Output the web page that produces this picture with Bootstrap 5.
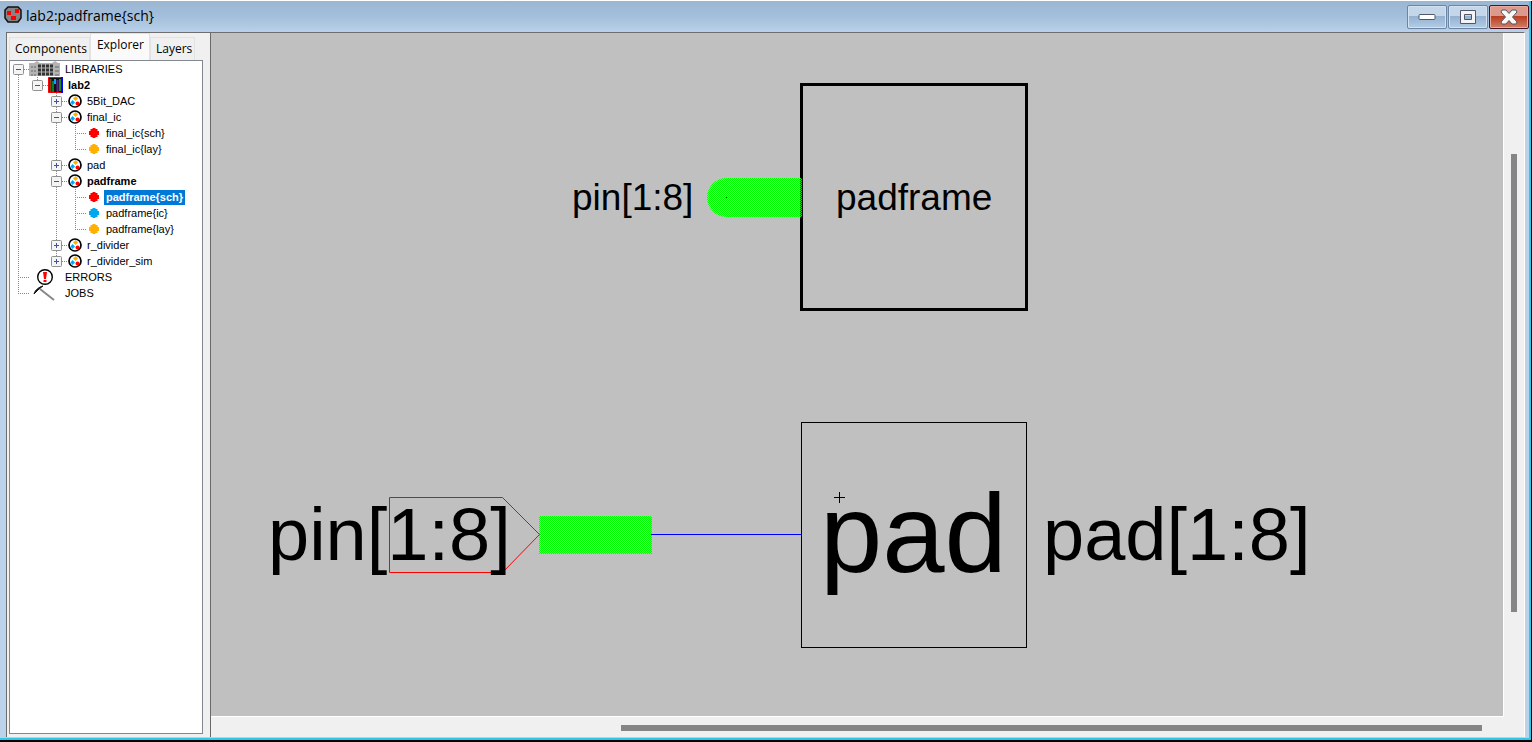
<!DOCTYPE html>
<html lang="en">
<head>
<meta charset="utf-8">
<meta name="viewport" content="width=device-width, initial-scale=1">
<title>lab2:padframe{sch}</title>
<link href="https://cdn.jsdelivr.net/npm/bootstrap@5.3.0/dist/css/bootstrap.min.css" rel="stylesheet">
<style>
body{background:#bcd2ea;font-family:"Open Sans","Noto Sans",sans-serif;color:#000;overflow:hidden}
.win{border-top:1px solid #fff;border-bottom:2px solid #000;box-shadow:inset -1px 0 #000,inset -3px 0 #2cc8e8,inset 0 -2px #2cc8e8;padding:0 7px 3px 6px}
.titlebar{height:31px;flex:none;margin:0 -4px 0 -6px;padding-left:4px;background:linear-gradient(#9ab6d2,#a4bfdb 50%,#b9d1ea)}
.title-text{font-size:14px;line-height:20px;margin:1px 0 0 4px}
.wbtns{gap:1px}
.wbtn{width:40px;height:24px;padding:0;border:1px solid #6d85a4;border-radius:2px;background:linear-gradient(#c3d6ea 0 45%,#93b0cf 45%,#b3cde6);box-shadow:inset 0 0 0 1px #d3e2f1;display:flex;align-items:center;justify-content:center}
.wbtn.close-w{border-color:#4a1222;background:linear-gradient(#dc9a8c 0 45%,#b83a1e 45%,#d08066);box-shadow:inset 0 0 0 1px #e6aca0}
.inner{border-top:1px solid #6e6e6e;border-left:1px solid #6e6e6e;border-right:1px solid #fff;background:#f0f0f0}
.side{width:203px;padding:0 7px 3px 2px}
.tabs{height:27px}
.tabs button{border:1px solid #e2e2e2;border-bottom:0;background:#f0f0f0;padding:0 2px 0 5px;font-size:12px;line-height:20px;height:23px;white-space:nowrap;color:#000}
.tabs .on{height:27px;background:#fafafa;padding:0 5px 4px 6px}
.tree{border:1px solid #828790;background:#fff}
.tree ul{list-style:none;margin:0;padding:0}
.trow{height:16px;font:11px/16px "Liberation Sans",Arial,sans-serif;display:flex;align-items:center;white-space:nowrap}
.trow svg{flex:none;display:block}
.trow span{padding:0 2px;line-height:15px;margin-left:2px}
.sel{background:#0078d7;color:#fff}
.canvas-col{border-left:1px solid #696969;min-width:0}
.sheet{background:#c0c0c0;min-width:0;overflow:hidden;border-right:1px solid #fff;border-bottom:1px solid #fff}
.sheet svg{display:block}
.sheet text{font-family:"Liberation Sans",Arial,sans-serif}
.vbar{width:20px;padding:121px 6px 0 7px}
.hbar{height:20px;padding:8px 42px 0 410px}
.thumb-v{width:6px;height:458px;background:#858585}
.thumb-h{height:6px;background:#858585}
</style>
</head>
<body>
<svg width="0" height="0" class="position-absolute" aria-hidden="true">
<defs>
<g id="minus"><rect x=".5" y=".5" width="10" height="10" rx="1" fill="#f4f4f4" stroke="#919191"/><path d="M3 5.500h5" stroke="#3a559f"/></g>
<g id="plus"><use href="#minus"/><path d="M5.500 3v5" stroke="#3a559f"/></g>
<g id="cell"><circle cx="7" cy="7" r="6" fill="#fff" stroke="#000" stroke-width="1.700"/><path d="M7.500 2l2.500 2.500L7.500 7 5 4.500z" fill="#ffb000"/><path d="M4.500 6l2.500 2.500L4.500 11 2.500 8.500z" fill="#00a8f0"/><circle cx="9.500" cy="9.500" r="2" fill="#f00"/></g>
<path id="dot" d="M3.500 0h3v1h2v2h1.500v4H8.500v2h-2v1h-3V9h-2V7H0V3h1.500V1h2z"/>
</defs>
</svg>
<main class="win vh-100 d-flex flex-column">
<header class="titlebar d-flex">
<svg width="18" height="18" class="mt-1" viewBox="0 0 18 18" aria-hidden="true"><path d="M4 2h10l3 3v8l-3 4H4l-3-4V5z" fill="#858585" stroke="#111" stroke-width="1.500"/><path d="M3 6h4v4H3zM11 4h4v4h-4zM7 11h5v4H7z" fill="#f00"/></svg>
<h1 class="title-text fw-normal flex-grow-1 pt-1">lab2:padframe{sch}</h1>
<div class="wbtns d-flex pt-1">
<button class="wbtn" aria-label="Minimize"><svg width="18" height="8"><rect x="1" y="1.500" width="16" height="5" rx="1" fill="#fff" stroke="#535666"/></svg></button>
<button class="wbtn" aria-label="Maximize"><svg width="18" height="16"><path d="M1.500 1.500h15v13h-15zM5.500 5.500v5h7v-5z" fill="#f4f4f4" fill-rule="evenodd" stroke="#535666"/></svg></button>
<button class="wbtn close-w" aria-label="Close"><svg width="18" height="16"><path d="M2 1h4l3 3.500L12 1h4l1 2-4.500 5L17 13l-1 2h-4l-3-3.500L6 15H2l-1-2 4.500-5L1 3z" fill="#f8f8f8" stroke="#535666"/></svg></button>
</div>
</header>
<div class="inner d-flex flex-grow-1">
<aside class="side d-flex flex-column flex-shrink-0">
<div class="tabs d-flex align-items-end" role="tablist">
<button role="tab">Components</button><button role="tab" class="on" aria-selected="true">Explorer</button><button role="tab">Layers</button>
</div>
<nav class="tree flex-grow-1" aria-label="Explorer">
<ul id="tree"></ul>
</nav>
</aside>
<section class="canvas-col d-flex flex-column flex-grow-1">
<div class="d-flex flex-grow-1">
<div class="sheet flex-grow-1">
<svg width="1292" height="683" viewBox="211 33 1292 683" role="img" aria-label="padframe schematic">
<defs><pattern id="dither" width="2" height="2" patternUnits="userSpaceOnUse"><path d="M0 0h1v1H0zM1 1h1v1H1z" fill="#0f0" shape-rendering="crispEdges"/></pattern></defs>
<g fill="none" shape-rendering="crispEdges">
<rect x="801.500" y="84.500" width="225" height="225" stroke="#000" stroke-width="3"/>
<rect x="801.500" y="422.500" width="225" height="225" stroke="#000"/>
<path d="M651 534.500h150" stroke="#00f"/>
<path d="M834 497.500h11M839.500 492v11" stroke="#000"/>
</g>
<path d="M802 178H726a19 19.500 0 0 0 0 39h76z" fill="url(#dither)"/>
<rect x="539" y="516" width="113" height="38" fill="url(#dither)"/>
<rect x="726" y="197" width="1" height="1"/>
<path d="M389.500 497.500h113l37 37-37 38h-113z" fill="none" stroke="#f00"/>
<g font-size="37"><text x="572" y="210">pin[1:8]</text><text x="836" y="210">padframe</text></g>
<g font-size="74"><text x="268" y="560">pin[1:8]</text><text x="1043" y="560">pad[1:8]</text></g>
<text x="820" y="572" font-size="112">pad</text>
</svg>
</div>
<div class="vbar"><div class="thumb-v"></div></div>
</div>
<div class="hbar"><div class="thumb-h"></div></div>
</section>
</div>
</main>
<script>
// depth, label, icon, expander, bold; rows share one dotted-guide layout
const rows=[[0,'LIBRARIES','lib','minus'],[1,'lab2','books','minus',1],[2,'5Bit_DAC','cell','plus'],[2,'final_ic','cell','minus'],[3,'final_ic{sch}','#f00'],[3,'final_ic{lay}','#ffb000'],[2,'pad','cell','plus'],[2,'padframe','cell','minus',1],[3,'padframe{sch}','#f00','',1,1],[3,'padframe{ic}','#00a8f0'],[3,'padframe{lay}','#ffb000'],[2,'r_divider','cell','plus'],[2,'r_divider_sim','cell','plus'],[0,'ERRORS','err'],[0,'JOBS','job']];
const art={
lib:'<path d="M19 2h5l3-2 3 2h12l3-2 3 2h2v13H19z" fill="#b4b4b4"/><path d="M28 5h15M28 9h15M28 13h15" stroke="#333" stroke-width="3" stroke-dasharray="3 1"/><path d="M22 5v10M25 5v10M46 5v10M48 5v10" stroke="#666" stroke-dasharray="2 2"/>',
books:'<path d="M38.500 1v14.500h14V.500h-14z" fill="#111" stroke="#f00"/><path d="M40.500 2v13" stroke="#853d18" stroke-width="2"/><path d="M43 4v11" stroke="#087d25" stroke-width="2"/><path d="M45 2v5" stroke="#0af" stroke-width="2"/><path d="M47.500 3v12" stroke="#5520a0" stroke-width="2"/><path d="M50 2v12" stroke="#178a2a" stroke-width="2"/><path d="M52 0v16" stroke="#00f" stroke-width="2"/>',
err:'<circle cx="35" cy="8" r="7.300" fill="#fff" stroke="#000" stroke-width="1.400"/><path d="M33 3h4l-1 7h-2zM33.500 11h3v2h-3z" fill="#f00"/>',
job:'<path d="M30 4l14 11" stroke="#888" stroke-width="2"/><path d="M24 9c1-4 5-7 9-8-3 2-5 4-6 5z" fill="#111" stroke="#111"/>'};
document.getElementById('tree').innerHTML=rows.map(([d,t,ic,ex,b,s],i)=>{
 const x=8+19*d,w=[51,54,73,92][d];let g='';
 const dl=(a)=>g+=`<path d="${a}" stroke="#888" stroke-dasharray="1 1"/>`;
 dl(`M8.500 ${i?0:8}V${i==14?8:16}`);
 if(i>1&&i<13)dl(`M46.500 0V${i==12?8:16}`);
 if(i==1)dl('M27.500 0V8');
 if(d==3)dl(`M65.500 0V${i==5||i==10?8:16}`);
 dl(`M${x} 8.500h${d?11:12}`);
 if(ex)g+=`<use href="#${ex}" x="${x-5}" y="3"/>`;
 g+=art[ic]||(ic=='cell'?'<use href="#cell" x="58" y="1"/>':`<use href="#dot" x="79" y="3" fill="${ic}"/>`);
 return `<li class="trow"><svg width="${w}" height="16" aria-hidden="true">${g}</svg><span class="${b?'fw-bold':''} ${s?'sel':''}">${t}</span></li>`}).join('');
</script>
<script src="https://cdn.jsdelivr.net/npm/bootstrap@5.3.0/dist/js/bootstrap.bundle.min.js"></script>
</body>
</html>
